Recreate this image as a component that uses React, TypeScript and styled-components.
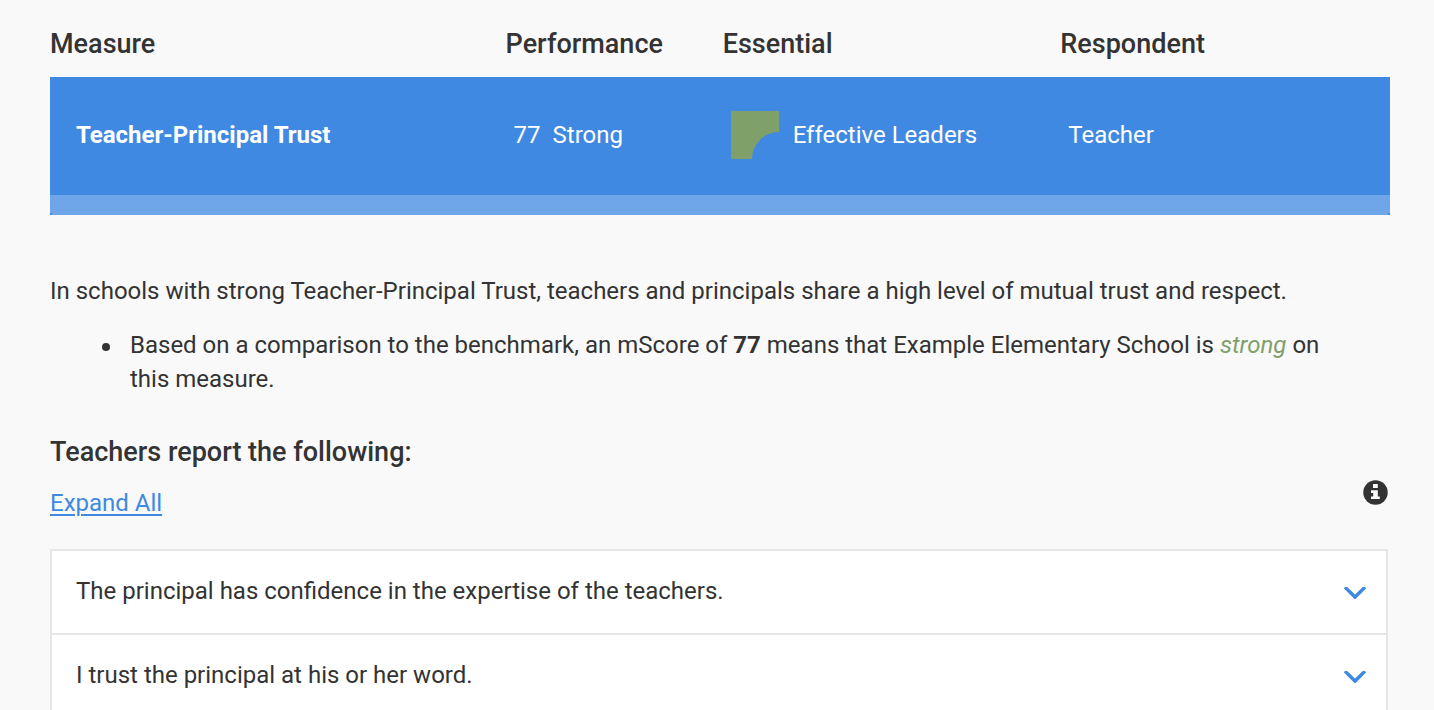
import React from "react";
import styled, { createGlobalStyle } from "styled-components";

const colors = {
  page: "#f9f9f9",
  text: "#333333",
  blue: "#3f89e3",
  lightBlue: "#6fa6ea",
  green: "#80a069",
  line: "#e6e6e6",
};

const GlobalStyle = createGlobalStyle`
  *, *::before, *::after { box-sizing: border-box; }
  body {
    margin: 0;
    background: ${colors.page};
    color: ${colors.text};
    font-family: Roboto, "Liberation Sans", sans-serif;
    font-size: 24px;
    line-height: 34px;
  }
`;

const Page = styled.main`
  padding: 24px 44px 0 50px;
`;

const MeasureTable = styled.table`
  width: 100%;
  table-layout: fixed;
  border-collapse: collapse;
`;

const HeaderCell = styled.th<{ $width: string }>`
  width: ${(p) => p.$width};
  padding: 0 0 13px;
  font-size: 27px;
  line-height: 40px;
  font-weight: 500;
  text-align: left;
`;

const MeasureRow = styled.tr`
  background: ${colors.blue};
  color: #ffffff;
`;

const MeasureCell = styled.td`
  height: 118px;
  padding: 0 8px 2px;
`;

const MeasureName = styled.th`
  padding: 0 26px 2px;
  font-weight: 700;
  text-align: left;
`;

const BandCell = styled.td`
  height: 20px;
  padding: 0;
  background:
    linear-gradient(${colors.blue}, ${colors.blue}) left bottom / 2px 2px no-repeat,
    linear-gradient(${colors.blue}, ${colors.blue}) right bottom / 2px 2px no-repeat,
    ${colors.lightBlue};
`;

const Score = styled.span`
  margin-right: 12px;
`;

const Essential = styled.div`
  display: flex;
  align-items: center;
  gap: 14px;
`;

const Intro = styled.p`
  margin: 59px 0 20px;
`;

const Findings = styled.ul`
  margin: 0;
  padding: 0 30px 0 80px;
  list-style: none;
`;

const Finding = styled.li`
  &::before {
    content: "";
    float: left;
    width: 8px;
    height: 8px;
    margin: 15px 0 0 -28px;
    border-radius: 50%;
    background: ${colors.text};
  }
`;

const Rating = styled.em`
  color: ${colors.green};
`;

const ReportTitle = styled.h2`
  margin: 36px 0 0;
  font-size: 27px;
  line-height: 40px;
  font-weight: 500;
`;

const Toolbar = styled.div`
  display: flex;
  justify-content: space-between;
  align-items: flex-start;
  padding: 8px 2px 0 0;
`;

const ExpandLink = styled.a`
  margin-top: 6px;
  color: ${colors.blue};
  text-decoration: underline;
  text-decoration-thickness: 2px;
  text-underline-offset: 3px;
`;

const InfoButton = styled.button`
  display: flex;
  padding: 0;
  border: 0;
  background: none;
  color: ${colors.text};
  cursor: pointer;
`;

const QuestionList = styled.div`
  margin: 29px 2px 0 0;
  border: 2px solid ${colors.line};
  background: #ffffff;
`;

const QuestionButton = styled.button`
  display: flex;
  justify-content: space-between;
  align-items: center;
  width: 100%;
  height: 84px;
  padding: 0 20px 2px 24px;
  border: 0;
  border-bottom: 2px solid ${colors.line};
  background: none;
  color: inherit;
  font: inherit;
  text-align: left;
  cursor: pointer;
`;

const columns = [
  { label: "Measure", width: "34%" },
  { label: "Performance", width: "16.2%" },
  { label: "Essential", width: "25.2%" },
  { label: "Respondent", width: "24.6%" },
];

const questions = [
  "The principal has confidence in the expertise of the teachers.",
  "I trust the principal at his or her word.",
];

const EssentialMark = () => (
  <svg width="48" height="48" viewBox="0 0 48 48" aria-hidden="true">
    <path d="M0 0H48V21A27 27 0 0 0 21 48H0Z" fill={colors.green} />
  </svg>
);

const InfoIcon = () => (
  <svg width="25" height="25" viewBox="0 0 25 25" aria-hidden="true">
    <circle cx="12.5" cy="12.5" r="12.2" fill="currentColor" />
    <path
      d="M10 4H14.8V8H10ZM8 10.3H14.8V16.4H16.8V19H8V16.4H10.2V13H8Z"
      fill={colors.page}
    />
  </svg>
);

const Chevron = () => (
  <svg width="22" height="16" viewBox="0 -4 22 16" aria-hidden="true">
    <path d="M0.8 0H3.2L11 7.6L18.8 0H21.2L22 1.4L11.6 12H10.4L0 1.4Z" fill={colors.blue} />
  </svg>
);

export default function App() {
  return (
    <>
      <GlobalStyle />
      <Page>
        <MeasureTable>
          <thead>
            <tr>
              {columns.map((c) => (
                <HeaderCell key={c.label} scope="col" $width={c.width}>
                  {c.label}
                </HeaderCell>
              ))}
            </tr>
          </thead>
          <tbody>
            <MeasureRow>
              <MeasureName scope="row">Teacher-Principal Trust</MeasureName>
              <MeasureCell>
                <Score>77</Score>Strong
              </MeasureCell>
              <MeasureCell>
                <Essential>
                  <EssentialMark />
                  Effective Leaders
                </Essential>
              </MeasureCell>
              <MeasureCell>Teacher</MeasureCell>
            </MeasureRow>
            <tr>
              <BandCell colSpan={4} />
            </tr>
          </tbody>
        </MeasureTable>
        <Intro>
          In schools with strong Teacher-Principal Trust, teachers and principals share a high level
          of mutual trust and respect.
        </Intro>
        <Findings>
          <Finding>
            Based on a comparison to the benchmark, an mScore of <strong>77</strong> means that
            Example Elementary School is <Rating>strong</Rating> on this measure.
          </Finding>
        </Findings>
        <ReportTitle>Teachers report the following:</ReportTitle>
        <Toolbar>
          <ExpandLink href="#questions">Expand All</ExpandLink>
          <InfoButton type="button" aria-label="About these results">
            <InfoIcon />
          </InfoButton>
        </Toolbar>
        <QuestionList id="questions">
          {questions.map((q) => (
            <QuestionButton key={q} type="button" aria-expanded="false">
              {q}
              <Chevron />
            </QuestionButton>
          ))}
        </QuestionList>
      </Page>
    </>
  );
}
